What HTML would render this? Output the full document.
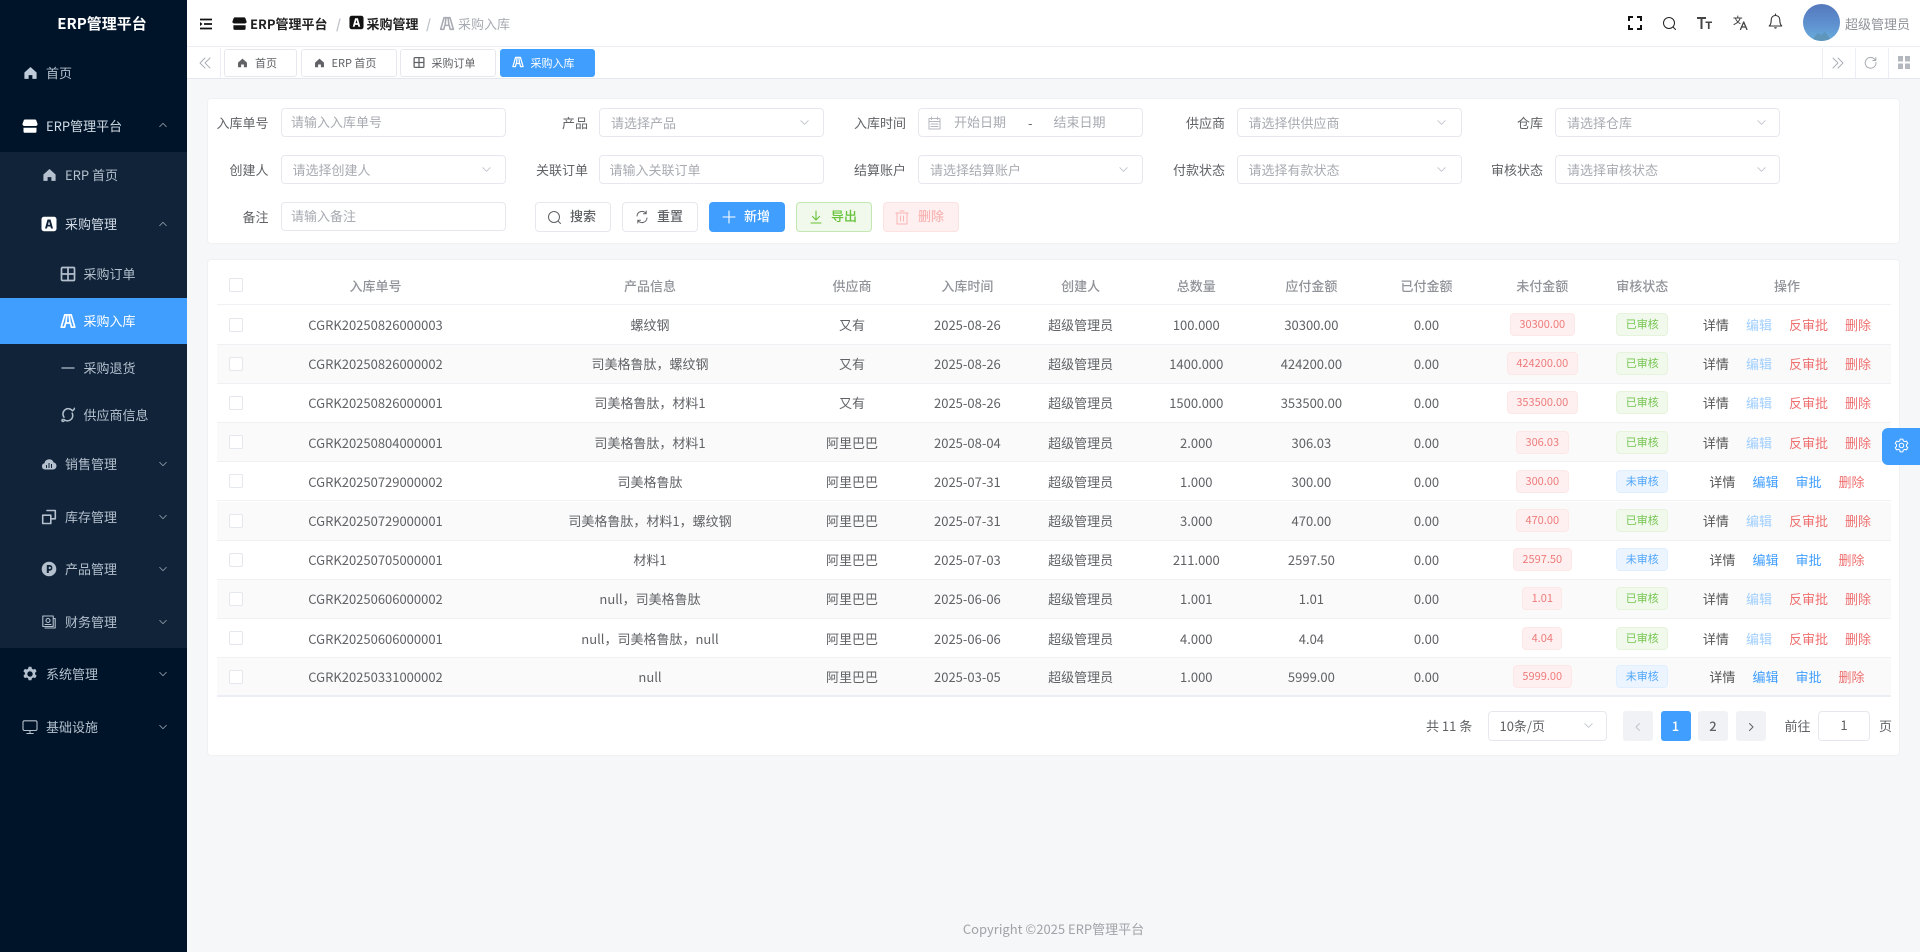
<!DOCTYPE html>
<html lang="zh-CN"><head><meta charset="utf-8"><title>采购入库</title>
<style>
*{box-sizing:border-box}
html,body{margin:0;padding:0;width:1920px;height:952px;overflow:hidden;background:#f5f7f9;font-family:"Noto Sans CJK SC","Liberation Sans",sans-serif;font-size:13px;color:#606266}
.a{position:absolute;white-space:nowrap}
.t{position:absolute;white-space:nowrap;height:20px;line-height:20px}
svg.i{position:absolute;display:block;fill:currentColor}
.s{fill:none;stroke:currentColor;stroke-width:1.3;stroke-linecap:round;stroke-linejoin:round}
.sb{color:#b4c0cd;font-size:13px}
.inp{position:absolute;width:225px;height:29px;background:#fff;border:1px solid #e6e8ed;border-radius:4px;color:#a8abb2;line-height:26px;padding-left:9.5px;white-space:nowrap}
.sel{padding-left:11px;line-height:28px}
.lb{position:absolute;width:80px;text-align:right;height:29px;line-height:29px;color:#606266}
.btn{position:absolute;top:202px;height:30px;width:75.5px;border-radius:4px;border:1px solid #e6e8ed;background:#fff;line-height:26px;font-weight:500;color:#606266}
.btn span{position:absolute;left:34px;top:0}
.tab{position:absolute;top:49px;height:28px;border:1px solid #e6e8ed;border-radius:3px;background:#fff;font-size:11px;line-height:26px;color:#606266}
.tab span{position:absolute;top:0}
.card{position:absolute;background:#fff;border:1px solid #f0f1f4;border-radius:4px;left:207px;width:1693px}
.r{position:absolute;left:216.5px;width:1674.5px;height:39.2px;display:grid;grid-template-columns:40px 238px 311px 93px 137.8px 88.7px 142.6px 87.6px 142.6px 89px 111px 178.4px 14.8px;align-items:center;text-align:center;border-bottom:1px solid #f0f1f4;white-space:nowrap}
.r.e{background:#fafafa}
.r.h{font-weight:500;color:#909399}
.cb{display:block;width:14px;height:14px;border:1px solid #e4e7ed;border-radius:2px;background:#fff;margin-left:12.5px}
.tg{display:inline-block;height:23px;line-height:21px;padding:0 8.5px;font-size:11px;border-radius:4px;border:1px solid;vertical-align:middle}
.rd{background:#fef0f0;border-color:#fde8e8;color:#ee7b7b}
.gr{background:#f0f9eb;border-color:#e6f4de;color:#76c552}
.bl{background:#ecf5ff;border-color:#e0efff;color:#4fa5fb}
.op{display:flex;justify-content:center;gap:17px}
.op i{font-style:normal;color:#555}.op .d{color:#a0cfff}.op .p{color:#409eff}.op .x{color:#ef6f6f}
.pg{position:absolute;top:711px;width:30px;height:30px;background:#f0f2f5;border-radius:3px;text-align:center;line-height:29px;color:#606266;font-weight:500}
</style></head><body>
<svg width="0" height="0" style="position:absolute">
<defs>
<symbol id="home" viewBox="0 0 16 16"><path d="M8 1.6 14.5 7.4V14.2H10V10.2H6V14.2H1.5V7.4Z"/></symbol>
<symbol id="store" viewBox="0 0 16 16"><path d="M3 1.500h10c.6 0 1 .3 1.200.8L15.600 6c0 1.400-1 2-2.200 2H2.600C1.400 8 .4 7.400.4 6l1.400-3.700C2 1.800 2.400 1.500 3 1.500Z"/><path d="M1.500 9.800h13v3.700c0 .8-.6 1.300-1.300 1.300H2.800c-.7 0-1.300-.5-1.300-1.300Z"/></symbol>
<symbol id="abox" viewBox="0 0 16 16"><path fill-rule="evenodd" d="M3 .8h10A2.500 2.500 0 0 1 15.500 3.300v9.400A2.500 2.500 0 0 1 13 15.200H3A2.500 2.500 0 0 1 .5 12.700V3.300A2.500 2.500 0 0 1 3 .8ZM6.500 3.500 4 12.500h2l.5-2h3l.5 2h2L9.500 3.500ZM7 8.700l1-3.500 1 3.500Z"/></symbol>
<symbol id="grid" viewBox="0 0 16 16"><rect class="s" style="stroke-width:1.700" x="1.500" y="1.500" width="13" height="13" rx="1"/><path class="s" style="stroke-width:1.700" d="M8 1.500v13M1.500 8h13"/></symbol>
<symbol id="road" viewBox="0 0 16 16"><path class="s" style="stroke-width:1.700" d="M4.800 1.800h6.400l3.600 12.400h-3.400l-1-4.200H5.600l-1 4.200H1.200ZM6.800 2 6 9.800M9.200 2l.8 7.800"/></symbol>
<symbol id="minus" viewBox="0 0 16 16"><path class="s" d="M2 8h12"/></symbol>
<symbol id="sup" viewBox="0 0 16 16"><path class="s" style="stroke-width:1.500" d="M12.500 3.800A5.300 5.300 0 0 0 4 10.200M3.800 12.400A5.300 5.300 0 0 0 12.200 6.200M3.800 14.300c-2 .4-2.200-.5-1.400-1.900M12.500 3.800c1.500-1.200 2.200-2 1.800-2.500"/></symbol>
<symbol id="cloud" viewBox="0 0 16 16"><path fill-rule="evenodd" d="M4 13.500a3.200 3.200 0 0 1-.6-6.300A4.800 4.800 0 0 1 12.600 6.400 3.600 3.600 0 0 1 12.400 13.500ZM5 9v3h1V9Zm2.500-2v5h1V7Zm2.500 1v4h1V8Z"/></symbol>
<symbol id="copy" viewBox="0 0 16 16"><path class="s" style="stroke-width:1.600" d="M6 1.500h8.300v8.300H9.800M1.700 6.200h8.100v8.300H1.700Z"/></symbol>
<symbol id="pc" viewBox="0 0 16 16"><path fill-rule="evenodd" d="M8 .7a7.300 7.300 0 1 1 0 14.600A7.300 7.300 0 0 1 8 .7ZM5.800 4v8h2V9.700h1.200a2.900 2.900 0 0 0 0-5.700Zm2 1.700h1a1.100 1.100 0 0 1 0 2.300h-1Z"/></symbol>
<symbol id="fin" viewBox="0 0 16 16"><path class="s" style="stroke-width:1.100" d="M1.800 2h10.400v10.500H1.800ZM12.200 4.500h2v9.500H4M4 10.500h6"/><circle class="s" style="stroke-width:1.100" cx="7" cy="6.500" r="2"/></symbol>
<symbol id="gear" viewBox="0 0 16 16"><path fill-rule="evenodd" d="M6.600.8h2.800l.5 2 1.300.7 2-.6 1.400 2.400-1.500 1.500v1.400l1.500 1.500-1.400 2.400-2-.6-1.300.7-.5 2H6.600l-.5-2-1.300-.7-2 .6-1.400-2.400 1.500-1.500V6.800L1.400 5.300l1.400-2.400 2 .6 1.300-.7ZM8 5.300a2.700 2.700 0 1 0 0 5.400 2.700 2.700 0 0 0 0-5.400Z"/></symbol>
<symbol id="mon" viewBox="0 0 16 16"><rect class="s" style="stroke-width:1.100" x="1" y="1.800" width="14" height="9.700" rx="1.500"/><path class="s" style="stroke-width:1.100" d="M8 11.500v3M4.800 14.500h6.400"/></symbol>
<symbol id="up" viewBox="0 0 12 12"><path class="s" style="stroke-width:1" d="M2 8 6 4l4 4"/></symbol>
<symbol id="dn" viewBox="0 0 12 12"><path class="s" style="stroke-width:1" d="M2 4l4 4 4-4"/></symbol>
</defs></svg>

<!-- SIDEBAR -->
<div class="a" style="left:0;top:0;width:187px;height:952px;background:#001429"></div>
<div class="a" style="left:0;top:152px;width:187px;height:496px;background:#102339"></div>
<div class="a" style="left:0;top:298px;width:187px;height:46px;background:#409eff"></div>
<div class="t" style="left:0;top:14px;width:204px;text-align:center;color:#fff;font-weight:700;font-size:15px">ERP管理平台</div>

<div class="sb">
<svg class="i" style="left:22.500px;top:65px;color:#bfcbd9" width="15" height="16"><use href="#home"/></svg><div class="t" style="left:46px;top:62.500px">首页</div>
<svg class="i" style="left:22px;top:118px;color:#fff" width="16" height="16"><use href="#store"/></svg><div class="t" style="left:46px;top:115.500px;color:#d3dce6">ERP管理平台</div>
<svg class="i" style="left:158px;top:120px;color:#8b97a5" width="10" height="10"><use href="#up"/></svg>
<svg class="i" style="left:41.500px;top:167px" width="15" height="16"><use href="#home"/></svg><div class="t" style="left:65px;top:165px">ERP 首页</div>
<svg class="i" style="left:41px;top:216px;color:#fff" width="16" height="16"><use href="#abox"/></svg><div class="t" style="left:65px;top:214px;color:#d3dce6">采购管理</div>
<svg class="i" style="left:158px;top:219px;color:#8b97a5" width="10" height="10"><use href="#up"/></svg>
<svg class="i" style="left:60px;top:266px" width="16" height="16"><use href="#grid"/></svg><div class="t" style="left:83.500px;top:264px">采购订单</div>
<svg class="i" style="left:60px;top:313px;color:#fff" width="16" height="16"><use href="#road"/></svg><div class="t" style="left:83.500px;top:311px;color:#fff">采购入库</div>
<svg class="i" style="left:60px;top:360px" width="16" height="16"><use href="#minus"/></svg><div class="t" style="left:83.500px;top:357.500px">采购退货</div>
<svg class="i" style="left:60px;top:407px" width="16" height="16"><use href="#sup"/></svg><div class="t" style="left:83.500px;top:404.500px">供应商信息</div>
<svg class="i" style="left:41px;top:456px" width="16" height="16"><use href="#cloud"/></svg><div class="t" style="left:65px;top:453.500px">销售管理</div>
<svg class="i" style="left:158px;top:459px;color:#8b97a5" width="10" height="10"><use href="#dn"/></svg>
<svg class="i" style="left:41px;top:509px" width="16" height="16"><use href="#copy"/></svg><div class="t" style="left:65px;top:506.500px">库存管理</div>
<svg class="i" style="left:158px;top:512px;color:#8b97a5" width="10" height="10"><use href="#dn"/></svg>
<svg class="i" style="left:41px;top:561px" width="16" height="16"><use href="#pc"/></svg><div class="t" style="left:65px;top:559px">产品管理</div>
<svg class="i" style="left:158px;top:564px;color:#8b97a5" width="10" height="10"><use href="#dn"/></svg>
<svg class="i" style="left:41px;top:614px" width="16" height="16"><use href="#fin"/></svg><div class="t" style="left:65px;top:611.500px">财务管理</div>
<svg class="i" style="left:158px;top:617px;color:#8b97a5" width="10" height="10"><use href="#dn"/></svg>
<svg class="i" style="left:22px;top:666px" width="16" height="16"><use href="#gear"/></svg><div class="t" style="left:46px;top:664px">系统管理</div>
<svg class="i" style="left:158px;top:669px;color:#8b97a5" width="10" height="10"><use href="#dn"/></svg>
<svg class="i" style="left:22px;top:719px" width="16" height="16"><use href="#mon"/></svg><div class="t" style="left:46px;top:716.500px">基础设施</div>
<svg class="i" style="left:158px;top:722px;color:#8b97a5" width="10" height="10"><use href="#dn"/></svg>
</div>

<!-- HEADER -->
<div class="a" style="left:187px;top:0;width:1733px;height:47px;background:#fff;border-bottom:1px solid #ebeef5"></div>
<svg class="i" style="left:199px;top:17px;color:#111" width="14" height="14" viewBox="0 0 14 14"><path class="s" style="stroke-width:1.700;stroke-linecap:butt" d="M1 2.500h12M5 7h8M1 11.500h12"/><path d="M1 5l2.500 2L1 9z"/></svg>
<svg class="i" style="left:232px;top:16px;color:#111" width="15" height="15"><use href="#store"/></svg>
<div class="t" style="left:250px;top:14px;color:#222;font-weight:700;font-size:13px">ERP管理平台</div>
<div class="t" style="left:336px;top:14px;color:#c0c4cc;font-weight:700;width:8px">/</div>
<svg class="i" style="left:349px;top:15px;color:#111" width="15" height="15"><use href="#abox"/></svg>
<div class="t" style="left:366.500px;top:14px;color:#222;font-weight:700;font-size:13px">采购管理</div>
<div class="t" style="left:426px;top:14px;color:#c0c4cc;font-weight:700">/</div>
<svg class="i" style="left:439px;top:16px;color:#a8abb2" width="16" height="15"><use href="#road"/></svg>
<div class="t" style="left:458px;top:14px;color:#a8abb2">采购入库</div>

<svg class="i" style="left:1628px;top:16px;color:#111" width="14" height="14" viewBox="0 0 14 14"><path class="s" style="stroke-width:2;stroke-linecap:butt;stroke-linejoin:miter" d="M1 5V1h4M9 1h4v4M13 9v4H9M5 13H1V9"/></svg>
<svg class="i" style="left:1662px;top:16px;color:#222" width="15" height="15" viewBox="0 0 15 15"><circle class="s" style="stroke-width:1" cx="7" cy="7" r="5.500"/><path class="s" style="stroke-width:1" d="M11 11l2.500 2.500"/></svg>
<svg class="i" style="left:1697px;top:16px;color:#444" width="15" height="14" viewBox="0 0 15 14"><path d="M0 1h9v2H5.500v10h-2V3H0ZM8.500 5.500H15V7h-2.400v6h-1.700V7H8.500Z"/></svg>
<svg class="i" style="left:1733px;top:15px;color:#444" width="15" height="15" viewBox="0 0 15 15"><path class="s" style="stroke-width:1" d="M.8 3h8M4.800 1v2M7.200 3C6.700 5.500 4.500 8 1 9.500M2.500 3.500c1 2.500 2.500 4 4.500 5"/><path class="s" style="stroke-width:1.300" d="M7.500 14.500 10.700 7l3.200 7.500M8.700 12h4"/></svg>
<svg class="i" style="left:1768px;top:13px;color:#333" width="15" height="16" viewBox="0 0 15 16"><path class="s" style="stroke-width:1.100" d="M7.500 2.500c-2.700 0-4.300 2-4.300 4.500 0 3-.7 5-2 6h12.600c-1.300-1-2-3-2-6 0-2.500-1.600-4.500-4.300-4.500ZM7.500 1v1.500"/><path d="M6.200 14.300h2.600a1.300 1.300 0 0 1-2.600 0Z"/></svg>
<div class="a" style="left:1803px;top:4px;width:37px;height:37px;border-radius:50%;background:linear-gradient(#5478bd 0%,#5f91cf 55%,#69addd 100%);overflow:hidden"><svg width="37" height="37" style="display:block"><path d="M8 37 15 29l3 2 4-3 7 9z" fill="#5d95bb"/></svg></div>
<div class="t" style="left:1845px;top:14px;color:#909399;font-size:13px">超级管理员</div>

<!-- TABS BAR -->
<div class="a" style="left:187px;top:47px;width:1733px;height:32px;background:#fff;border-bottom:1px solid #e4e7ed"></div>
<div class="a" style="left:220px;top:48px;width:1px;height:30px;background:#ebeef5"></div>
<svg class="i" style="left:198px;top:56px;color:#a8abb2" width="14" height="14" viewBox="0 0 14 14"><path class="s" style="stroke-width:.9" d="M7 2 2 7l5 5M12 2 7 7l5 5"/></svg>
<div class="tab" style="left:224px;width:73px"><span style="left:30px">首页</span></div>
<svg class="i" style="left:236.500px;top:57px;color:#606266" width="11" height="12"><use href="#home"/></svg>
<div class="tab" style="left:301px;width:96px"><span style="left:29.500px">ERP 首页</span></div>
<svg class="i" style="left:313.500px;top:57px;color:#606266" width="11" height="12"><use href="#home"/></svg>
<div class="tab" style="left:400px;width:96px"><span style="left:30.500px">采购订单</span></div>
<svg class="i" style="left:413px;top:56px;color:#606266" width="12" height="13"><use href="#grid"/></svg>
<div class="tab" style="left:499.500px;width:95px;background:#409eff;border-color:#409eff;color:#fff"><span style="left:30px">采购入库</span></div>
<svg class="i" style="left:511.500px;top:56px;color:#fff" width="12" height="12"><use href="#road"/></svg>
<div class="a" style="left:1822px;top:48px;width:1px;height:30px;background:#ebeef5"></div>
<div class="a" style="left:1855px;top:48px;width:1px;height:30px;background:#ebeef5"></div>
<div class="a" style="left:1888px;top:48px;width:1px;height:30px;background:#ebeef5"></div>
<svg class="i" style="left:1831px;top:56px;color:#a8abb2" width="14" height="14" viewBox="0 0 14 14"><path class="s" style="stroke-width:.9" d="M2 2l5 5-5 5M7 2l5 5-5 5"/></svg>
<svg class="i" style="left:1864px;top:56px;color:#a8abb2" width="13" height="13" viewBox="0 0 13 13"><path class="s" style="stroke-width:1" d="M11.500 4.500A5.400 5.400 0 1 0 12 6.500M11.800 1.500v3h-3"/></svg>
<svg class="i" style="left:1898px;top:56px;color:#b4b7be" width="12" height="13" viewBox="0 0 12 13"><path d="M0 0h5v5.500H0ZM7 0h5v5.500H7ZM0 7.500h5V13H0ZM7 7.500h5V13H7Z"/></svg>

<!-- SEARCH CARD -->
<div class="card" style="top:98px;height:146px"></div>
<div class="lb" style="left:188.500px;top:108px">入库单号</div><div class="inp" style="left:280.500px;top:108px">请输入入库单号</div>
<div class="lb" style="left:508px;top:108px">产品</div><div class="inp sel" style="left:599px;top:108px">请选择产品</div>
<div class="lb" style="left:826px;top:108px">入库时间</div><div class="inp" style="left:918px;top:108px"></div>
<div class="t" style="left:954px;top:112px;color:#a8abb2">开始日期</div><div class="t" style="left:1028px;top:113px;color:#606266">-</div><div class="t" style="left:1053.500px;top:112px;color:#a8abb2">结束日期</div>
<svg class="i" style="left:928px;top:116px;color:#b4b7be" width="13" height="14" viewBox="0 0 13 14"><path class="s" style="stroke-width:1" d="M1 2.500h11v10.500H1ZM1 5.500h11M3.500 1v2.500M9.500 1v2.500M3 8h7M3 10.500h7"/></svg>
<div class="lb" style="left:1145px;top:108px">供应商</div><div class="inp sel" style="left:1236.500px;top:108px">请选择供供应商</div>
<div class="lb" style="left:1463px;top:108px">仓库</div><div class="inp sel" style="left:1555px;top:108px">请选择仓库</div>

<div class="lb" style="left:188.500px;top:155px">创建人</div><div class="inp sel" style="left:280.500px;top:155px">请选择创建人</div>
<div class="lb" style="left:508px;top:155px">关联订单</div><div class="inp" style="left:599px;top:155px;line-height:27px">请输入关联订单</div>
<div class="lb" style="left:826px;top:155px">结算账户</div><div class="inp sel" style="left:918px;top:155px">请选择结算账户</div>
<div class="lb" style="left:1145px;top:155px">付款状态</div><div class="inp sel" style="left:1236.500px;top:155px">请选择有款状态</div>
<div class="lb" style="left:1463px;top:155px">审核状态</div><div class="inp sel" style="left:1555px;top:155px">请选择审核状态</div>

<div class="lb" style="left:188.500px;top:202px">备注</div><div class="inp" style="left:280.500px;top:202px">请输入备注</div>

<svg class="i" style="left:799px;top:117px;color:#c0c4cc" width="11" height="11"><use href="#dn"/></svg>
<svg class="i" style="left:1436px;top:117px;color:#c0c4cc" width="11" height="11"><use href="#dn"/></svg>
<svg class="i" style="left:1756px;top:117px;color:#c0c4cc" width="11" height="11"><use href="#dn"/></svg>
<svg class="i" style="left:481px;top:164px;color:#c0c4cc" width="11" height="11"><use href="#dn"/></svg>
<svg class="i" style="left:1118px;top:164px;color:#c0c4cc" width="11" height="11"><use href="#dn"/></svg>
<svg class="i" style="left:1436px;top:164px;color:#c0c4cc" width="11" height="11"><use href="#dn"/></svg>
<svg class="i" style="left:1756px;top:164px;color:#c0c4cc" width="11" height="11"><use href="#dn"/></svg>

<div class="btn" style="left:535px"><span>搜索</span></div>
<svg class="i" style="left:547px;top:210px;color:#606266" width="15" height="15" viewBox="0 0 15 15"><circle class="s" style="stroke-width:1" cx="7" cy="7" r="5.500"/><path class="s" style="stroke-width:1" d="M11 11l2.500 2.500"/></svg>
<div class="btn" style="left:622px"><span>重置</span></div>
<svg class="i" style="left:635px;top:210px;color:#606266" width="14" height="14" viewBox="0 0 14 14"><path class="s" style="stroke-width:1" d="M2 6a5 5 0 0 1 9-2.500M12 8a5 5 0 0 1-9 2.500M11.200 1v2.700H8.500M2.800 13v-2.700h2.700"/></svg>
<div class="btn" style="left:709px;background:#409eff;border-color:#409eff;color:#fff"><span>新增</span></div>
<svg class="i" style="left:722px;top:210px;color:#fff" width="14" height="14" viewBox="0 0 14 14"><path class="s" style="stroke-width:1.100" d="M7 1v12M1 7h12"/></svg>
<div class="btn" style="left:796px;background:#f0f9eb;border-color:#c2e7b0;color:#67c23a"><span>导出</span></div>
<svg class="i" style="left:809px;top:210px;color:#67c23a" width="14" height="14" viewBox="0 0 14 14"><path class="s" style="stroke-width:1.100" d="M7 1v8.500M3.500 6.500 7 10l3.500-3.500M2 13h10"/></svg>
<div class="btn" style="left:883px;background:#fef0f0;border-color:#fde2e2;color:#f9b4b4"><span>删除</span></div>
<svg class="i" style="left:895px;top:210px;color:#f9b4b4" width="14" height="15" viewBox="0 0 14 15"><path class="s" style="stroke-width:1" d="M2 3h10v11H2ZM.8 3h12.400M5 1h4M5.500 6v5M8.500 6v5"/></svg>

<!-- TABLE CARD -->
<div class="card" style="top:259px;height:497px"></div>

<div class="r h" style="top:266.300px;height:39px"><div><span class="cb"></span></div><div>入库单号</div><div>产品信息</div><div>供应商</div><div>入库时间</div><div>创建人</div><div>总数量</div><div>应付金额</div><div>已付金额</div><div>未付金额</div><div>审核状态</div><div>操作</div><div></div></div>

<div class="r" style="top:305.500px"><div><span class="cb"></span></div><div>CGRK20250826000003</div><div>螺纹钢</div><div>又有</div><div>2025-08-26</div><div>超级管理员</div><div>100.000</div><div>30300.00</div><div>0.00</div><div><span class="tg rd">30300.00</span></div><div><span class="tg gr">已审核</span></div><div class="op"><i>详情</i><i class="d">编辑</i><i class="x">反审批</i><i class="x">删除</i></div><div></div></div>

<div class="r e" style="top:344.700px"><div><span class="cb"></span></div><div>CGRK20250826000002</div><div>司美格鲁肽，螺纹钢</div><div>又有</div><div>2025-08-26</div><div>超级管理员</div><div>1400.000</div><div>424200.00</div><div>0.00</div><div><span class="tg rd">424200.00</span></div><div><span class="tg gr">已审核</span></div><div class="op"><i>详情</i><i class="d">编辑</i><i class="x">反审批</i><i class="x">删除</i></div><div></div></div>

<div class="r" style="top:383.900px"><div><span class="cb"></span></div><div>CGRK20250826000001</div><div>司美格鲁肽，材料1</div><div>又有</div><div>2025-08-26</div><div>超级管理员</div><div>1500.000</div><div>353500.00</div><div>0.00</div><div><span class="tg rd">353500.00</span></div><div><span class="tg gr">已审核</span></div><div class="op"><i>详情</i><i class="d">编辑</i><i class="x">反审批</i><i class="x">删除</i></div><div></div></div>

<div class="r e" style="top:423.100px"><div><span class="cb"></span></div><div>CGRK20250804000001</div><div>司美格鲁肽，材料1</div><div>阿里巴巴</div><div>2025-08-04</div><div>超级管理员</div><div>2.000</div><div>306.03</div><div>0.00</div><div><span class="tg rd">306.03</span></div><div><span class="tg gr">已审核</span></div><div class="op"><i>详情</i><i class="d">编辑</i><i class="x">反审批</i><i class="x">删除</i></div><div></div></div>

<div class="r" style="top:462.300px"><div><span class="cb"></span></div><div>CGRK20250729000002</div><div>司美格鲁肽</div><div>阿里巴巴</div><div>2025-07-31</div><div>超级管理员</div><div>1.000</div><div>300.00</div><div>0.00</div><div><span class="tg rd">300.00</span></div><div><span class="tg bl">未审核</span></div><div class="op"><i>详情</i><i class="p">编辑</i><i class="p">审批</i><i class="x">删除</i></div><div></div></div>

<div class="r e" style="top:501.500px"><div><span class="cb"></span></div><div>CGRK20250729000001</div><div>司美格鲁肽，材料1，螺纹钢</div><div>阿里巴巴</div><div>2025-07-31</div><div>超级管理员</div><div>3.000</div><div>470.00</div><div>0.00</div><div><span class="tg rd">470.00</span></div><div><span class="tg gr">已审核</span></div><div class="op"><i>详情</i><i class="d">编辑</i><i class="x">反审批</i><i class="x">删除</i></div><div></div></div>

<div class="r" style="top:540.700px"><div><span class="cb"></span></div><div>CGRK20250705000001</div><div>材料1</div><div>阿里巴巴</div><div>2025-07-03</div><div>超级管理员</div><div>211.000</div><div>2597.50</div><div>0.00</div><div><span class="tg rd">2597.50</span></div><div><span class="tg bl">未审核</span></div><div class="op"><i>详情</i><i class="p">编辑</i><i class="p">审批</i><i class="x">删除</i></div><div></div></div>

<div class="r e" style="top:579.900px"><div><span class="cb"></span></div><div>CGRK20250606000002</div><div>null，司美格鲁肽</div><div>阿里巴巴</div><div>2025-06-06</div><div>超级管理员</div><div>1.001</div><div>1.01</div><div>0.00</div><div><span class="tg rd">1.01</span></div><div><span class="tg gr">已审核</span></div><div class="op"><i>详情</i><i class="d">编辑</i><i class="x">反审批</i><i class="x">删除</i></div><div></div></div>

<div class="r" style="top:619.100px"><div><span class="cb"></span></div><div>CGRK20250606000001</div><div>null，司美格鲁肽，null</div><div>阿里巴巴</div><div>2025-06-06</div><div>超级管理员</div><div>4.000</div><div>4.04</div><div>0.00</div><div><span class="tg rd">4.04</span></div><div><span class="tg gr">已审核</span></div><div class="op"><i>详情</i><i class="d">编辑</i><i class="x">反审批</i><i class="x">删除</i></div><div></div></div>

<div class="r e" style="top:658.300px;border-bottom:2px solid #ebeef5"><div><span class="cb"></span></div><div>CGRK20250331000002</div><div>null</div><div>阿里巴巴</div><div>2025-03-05</div><div>超级管理员</div><div>1.000</div><div>5999.00</div><div>0.00</div><div><span class="tg rd">5999.00</span></div><div><span class="tg bl">未审核</span></div><div class="op"><i>详情</i><i class="p">编辑</i><i class="p">审批</i><i class="x">删除</i></div><div></div></div>

<!-- PAGINATION -->
<div class="t" style="left:1426px;top:716px">共 11 条</div>
<div class="inp" style="left:1487.500px;top:711px;width:119px;height:30px;color:#606266;line-height:27px;padding-left:11px">10条/页</div>
<svg class="i" style="left:1583px;top:720px;color:#c0c4cc" width="11" height="11"><use href="#dn"/></svg>
<div class="pg" style="left:1623px;color:#c0c4cc"><svg width="10" height="10" viewBox="0 0 10 10" style="vertical-align:-1px"><path class="s" style="stroke-width:1" d="M6.500 1.500 3 5l3.500 3.500"/></svg></div>
<div class="pg" style="left:1660.500px;background:#409eff;color:#fff">1</div>
<div class="pg" style="left:1698px">2</div>
<div class="pg" style="left:1736px"><svg width="10" height="10" viewBox="0 0 10 10" style="vertical-align:-1px"><path class="s" style="stroke-width:1" d="M3.500 1.500 7 5 3.500 8.500"/></svg></div>
<div class="t" style="left:1784.500px;top:716px">前往</div>
<div class="inp" style="left:1818px;top:711px;width:52px;height:30px;color:#606266;text-align:center;padding:0;line-height:26px">1</div>
<div class="t" style="left:1879px;top:716px">页</div>

<!-- FLOAT + FOOTER -->
<div class="a" style="left:1882px;top:428px;width:38px;height:37px;background:#409eff;border-radius:6px 0 0 6px"></div>
<svg class="i" style="left:1894px;top:438px;color:#fff" width="15" height="15" viewBox="0 0 16 16"><path class="s" style="stroke-width:1.100" d="M6.600 1.200h2.800l.5 1.900 1.500.8 1.900-.6 1.400 2.400-1.400 1.400v1.800l1.400 1.400-1.400 2.400-1.900-.6-1.500.8-.5 1.900H6.600l-.5-1.900-1.500-.8-1.900.6-1.400-2.400 1.400-1.400V7.100L1.300 5.700l1.400-2.400 1.900.6 1.500-.8Z"/><circle class="s" style="stroke-width:1.100" cx="8" cy="8" r="2.400"/></svg>
<div class="t" style="left:187px;top:919px;width:1733px;text-align:center;color:#a0a3a8">Copyright ©2025 ERP管理平台</div>
</body></html>
